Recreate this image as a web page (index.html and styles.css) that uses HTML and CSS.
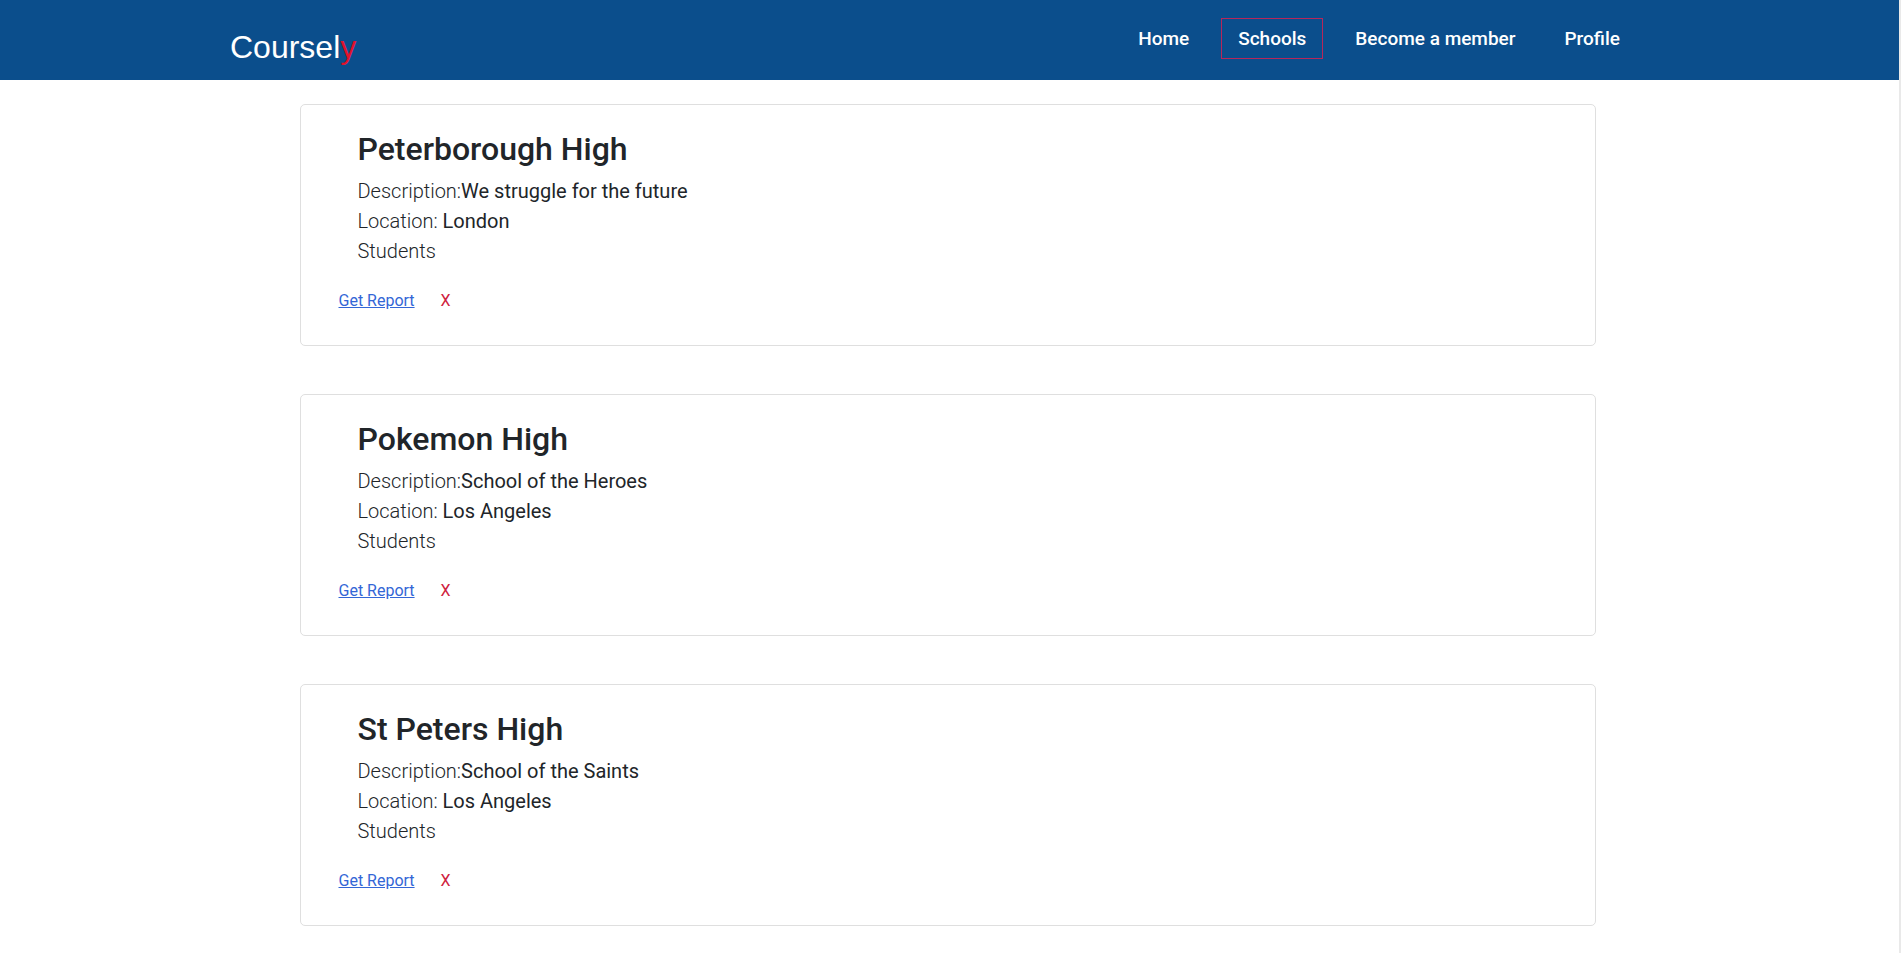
FILE: index.html
```html
<!DOCTYPE html>
<html lang="en">
<head>
<meta charset="utf-8">
<title>Coursely - Schools</title>
<link rel="stylesheet" href="styles.css">
</head>
<body>
<div class="page">
  <header class="topbar">
    <a class="brand" href="#">Coursel<span class="brand-y">y</span></a>
    <nav class="nav">
      <a class="nav-link" href="#">Home</a>
      <a class="nav-link active" href="#">Schools</a>
      <a class="nav-link" href="#">Become a member</a>
      <a class="nav-link" href="#">Profile</a>
    </nav>
  </header>
  <main class="list">
    <section class="card">
      <div class="info">
        <h2 class="title">Peterborough High</h2>
        <p class="lead">Description:<span class="val">We struggle for the future</span></p>
        <p class="lead">Location: <span class="val">London</span></p>
        <p class="lead">Students</p>
      </div>
      <div class="actions">
        <a class="report" href="#">Get Report</a>
        <a class="remove" href="#">X</a>
      </div>
    </section>
    <section class="card">
      <div class="info">
        <h2 class="title">Pokemon High</h2>
        <p class="lead">Description:<span class="val">School of the Heroes</span></p>
        <p class="lead">Location: <span class="val">Los Angeles</span></p>
        <p class="lead">Students</p>
      </div>
      <div class="actions">
        <a class="report" href="#">Get Report</a>
        <a class="remove" href="#">X</a>
      </div>
    </section>
    <section class="card">
      <div class="info">
        <h2 class="title">St Peters High</h2>
        <p class="lead">Description:<span class="val">School of the Saints</span></p>
        <p class="lead">Location: <span class="val">Los Angeles</span></p>
        <p class="lead">Students</p>
      </div>
      <div class="actions">
        <a class="report" href="#">Get Report</a>
        <a class="remove" href="#">X</a>
      </div>
    </section>
  </main>
</div>
</body>
</html>
```

FILE: styles.css
```css
html {
  background: #e9e9e9;
}
body {
  margin: 0;
  font-family: Roboto, "Noto Sans", sans-serif;
  color: #212529;
}
.page {
  margin-right: 2px;
  min-height: 100vh;
  background: #ffffff;
}
.topbar {
  height: 80px;
  background: #0b4e8c;
  display: flex;
  align-items: flex-start;
  justify-content: space-between;
  padding: 0 262px 0 230px;
  box-sizing: border-box;
}
.brand {
  margin-top: 31px;
  font-family: "Liberation Sans", Arial, sans-serif;
  font-size: 32px;
  line-height: 32px;
  color: #ffffff;
  text-decoration: none;
}
.brand-y {
  color: #e0122c;
}
.nav {
  margin-top: 18px;
  display: flex;
  gap: 15px;
}
.nav-link {
  display: block;
  padding: 0 16px;
  height: 41px;
  line-height: 39px;
  box-sizing: border-box;
  border: 1px solid transparent;
  font-size: 19px;
  font-weight: 500;
  color: #ffffff;
  text-decoration: none;
}
.nav-link.active {
  border-color: #b8265a;
}
.list {
  width: 1296px;
  margin-left: calc(50% - 650px);
  padding-top: 24px;
  display: flex;
  flex-direction: column;
  gap: 47.5px;
}
.card {
  border: 1px solid #dfdfdf;
  border-radius: 5px;
  padding: 25px 0 32px 38px;
}
.info {
  padding-left: 19px;
}
.title {
  margin: 0 0 8px;
  font-size: 32px;
  font-weight: 500;
  line-height: 1.2;
}
.lead {
  margin: 0;
  font-size: 20px;
  font-weight: 300;
  line-height: 30px;
}
.val {
  font-weight: 400;
}
.actions {
  margin-top: 23px;
  display: flex;
  gap: 26px;
  font-size: 16px;
  line-height: 24px;
}
.report {
  color: #3366d6;
  text-decoration: underline;
}
.remove {
  color: #cf1d3e;
  text-decoration: none;
}
```
